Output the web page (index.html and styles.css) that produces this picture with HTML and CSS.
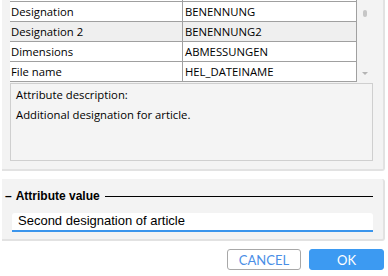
FILE: index.html
```html
<!DOCTYPE html>
<html lang="en">
<head>
<meta charset="UTF-8">
<title>Attribute</title>
<link rel="stylesheet" href="styles.css">
</head>
<body>

<div class="panel top-panel">
    <div class="table-area">
        <div class="rows">
            <div class="row cut"><div class="cell name"></div><div class="cell value"></div></div>
            <div class="row"><div class="cell name">Designation</div><div class="cell value">BENENNUNG</div></div>
            <div class="row selected"><div class="cell name">Designation 2</div><div class="cell value">BENENNUNG2</div></div>
            <div class="row"><div class="cell name">Dimensions</div><div class="cell value">ABMESSUNGEN</div></div>
            <div class="row"><div class="cell name">File name</div><div class="cell value">HEL_DATEINAME</div></div>
        </div>
        <div class="scrollbar">
            <div class="thumb"></div>
            <div class="arrow"></div>
        </div>
    </div>
    <div class="description">
        <div>Attribute description:</div>
        <div>Additional designation for article.</div>
    </div>
</div>

<div class="panel value-panel">
    <div class="legend">
        <span class="dash">&ndash;</span>
        <span class="legend-text">Attribute value</span>
        <span class="legend-line"></span>
    </div>
    <div class="value-input">Second designation of article</div>
</div>

<div class="buttons">
    <button class="btn cancel">CANCEL</button>
    <button class="btn ok">OK</button>
</div>

</body>
</html>
```

FILE: styles.css
```css
body {
    margin: 0;
    background: #ffffff;
    font-family: "Open Sans", sans-serif;
    font-size: 11.3px;
    color: #000000;
}

.panel {
    margin-left: 2px;
    width: 381px;
    background: #f3f3f3;
    border-right: 2px solid #e2e2e2;
    border-bottom: 2px solid #e2e2e2;
    box-sizing: border-box;
}

.top-panel {
    height: 171px;
    width: 383px;
    padding-left: 8px;
    border-radius: 0 0 3px 0;
}

.table-area {
    display: flex;
    height: 82px;
}

.rows {
    width: 347px;
    border-right: 1px solid #a0a0a0;
    border-bottom: 1px solid #a0a0a0;
    box-sizing: border-box;
    background: #ffffff;
}

.row {
    display: flex;
    height: 20px;
    border-top: 1px solid #a0a0a0;
    box-sizing: border-box;
}

.row.cut {
    height: 1px;
    border-top: none;
}

.row.selected {
    background: #efefef;
}

.cell {
    line-height: 19px;
    padding-left: 2px;
    white-space: nowrap;
    overflow: hidden;
}

.cell.name {
    width: 173px;
    border-right: 1px solid #a0a0a0;
    box-sizing: border-box;
    padding-left: 1px;
}

.cell.value {
    flex: 1;
}

.scrollbar {
    width: 16px;
    display: flex;
    flex-direction: column;
    align-items: center;
    padding-top: 10px;
    box-sizing: border-box;
}

.thumb {
    width: 4px;
    height: 7px;
    border-radius: 2px;
    background: #c6c6c6;
}

.arrow {
    margin-top: 55px;
    width: 0;
    height: 0;
    border-left: 3px solid transparent;
    border-right: 3px solid transparent;
    border-top: 3px solid #b4b4b4;
}

.description {
    margin-top: 1px;
    width: 363px;
    height: 78px;
    border: 1px solid #cfcfcf;
    box-sizing: border-box;
    background: #f4f4f4;
    padding: 1px 0 0 5px;
    line-height: 20px;
}

.value-panel {
    margin-top: 8px;
    height: 62px;
    width: 383px;
    padding: 8px 10px 0 3px;
    border-radius: 0 3px 3px 0;
}

.legend {
    display: flex;
    align-items: center;
    height: 18px;
    font-family: "Liberation Sans", Arial, sans-serif;
    font-size: 12px;
    font-weight: bold;
}

.dash {
    margin-right: 4px;
}

.legend-text {
    margin-right: 5px;
}

.legend-line {
    flex: 1;
    height: 1px;
    background: #000000;
}

.value-input {
    margin: 8px 0 0 7px;
    height: 17px;
    background: #ffffff;
    border-bottom: 2px solid #3b95ec;
    border-radius: 3px 3px 0 0;
    padding-left: 6px;
    font-family: "Liberation Sans", Arial, sans-serif;
    font-size: 13px;
    line-height: 16px;
}

.buttons {
    display: flex;
    justify-content: flex-end;
    gap: 8px;
    margin-top: 8px;
    padding-right: 4px;
}

.btn {
    height: 21px;
    border-radius: 3px;
    font-family: "Lato", sans-serif;
    font-size: 13px;
    padding: 0;
    cursor: pointer;
}

.cancel {
    width: 74px;
    background: #ffffff;
    border: 1px solid #a8a8a8;
    color: #4a8ee6;
}

.ok {
    width: 75px;
    background: #3c9af2;
    border: 1px solid #3c9af2;
    color: #ffffff;
}
```
